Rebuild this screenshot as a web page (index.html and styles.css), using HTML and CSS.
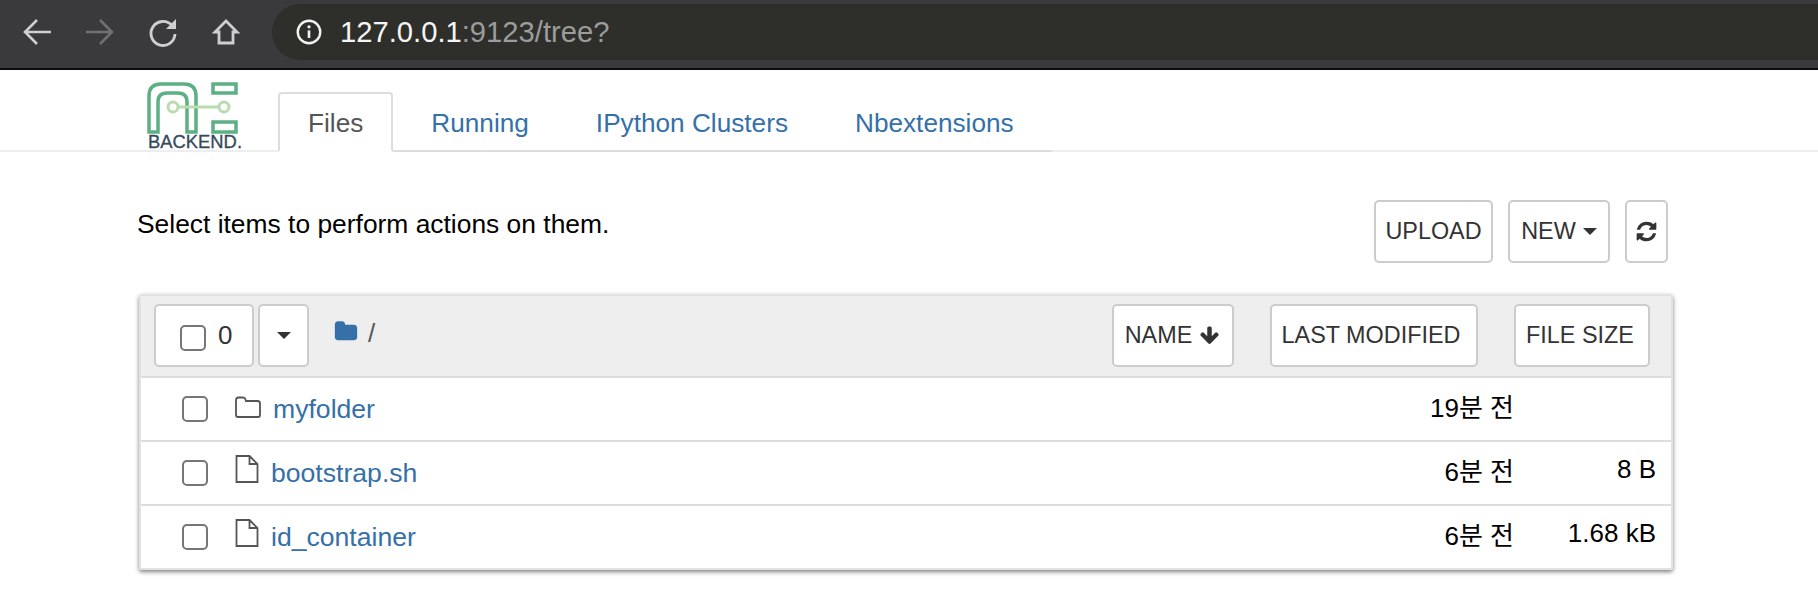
FILE: index.html
```html
<!DOCTYPE html>
<html>
<head>
  <title>Home</title>
  <meta charset="UTF-8">
  <link rel="stylesheet" href="styles.css">
</head>
<body>
  <div class="browser-bar">
    <div class="nav-icons">
      <svg class="nav-icon" viewBox="0 0 32 32"><path d="M30 16H4M16 4L4 16l12 12" fill="none" stroke="#cfcfcf" stroke-width="2.6"/></svg>
      <svg class="nav-icon" viewBox="0 0 32 32"><path d="M2 16h26M16 4l12 12-12 12" fill="none" stroke="#707070" stroke-width="2.6"/></svg>
      <svg class="nav-icon" viewBox="0 0 32 32"><path d="M25 9.500A12 12 0 1 0 28 18" fill="none" stroke="#cfcfcf" stroke-width="2.8"/><path d="M19 13h10V3z" fill="#cfcfcf"/></svg>
      <svg class="nav-icon" viewBox="0 0 32 32"><path d="M16 5L5 16h4v11h14V16h4z" fill="none" stroke="#cfcfcf" stroke-width="2.8"/></svg>
    </div>
    <div class="url-pill">
      <svg class="info-icon" viewBox="0 0 24 24"><circle cx="12" cy="12" r="10.400" fill="none" stroke="#f2f2f2" stroke-width="2.200"/><path d="M12 10.500v7" stroke="#f2f2f2" stroke-width="2.400"/><circle cx="12" cy="7.200" r="1.500" fill="#f2f2f2"/></svg>
      <span class="url-host">127.0.0.1</span><span class="url-rest">:9123/tree?</span>
    </div>
  </div>

  <div class="header">
    <svg class="logo" viewBox="0 0 96 67">
      <path d="M2 50V14Q2 2 14 2H37Q49 2 49 14V50H40V20Q40 11 31 11H20Q11 11 11 20V50Z" fill="none" stroke="#5cb083" stroke-width="3.500"/>
      <path d="M66 2h23v9H66zM66 40h23v10H66z" fill="none" stroke="#5cb083" stroke-width="3.500"/>
      <path d="M31 25h41" stroke="#b9dcae" stroke-width="3"/>
      <circle cx="26" cy="25" r="5" fill="#fff" stroke="#b9dcae" stroke-width="3"/>
      <circle cx="77" cy="25" r="5" fill="#fff" stroke="#b9dcae" stroke-width="3"/>
      <text x="1" y="66" class="logo-text" textLength="94" lengthAdjust="spacingAndGlyphs">BACKEND.</text>
    </svg>
    <div class="tabs">
      <a class="tab tab-active">Files</a>
      <a class="tab">Running</a>
      <a class="tab">IPython Clusters</a>
      <a class="tab">Nbextensions</a>
    </div>
  </div>

  <div class="main">
    <div class="action-row">
      <p class="hint">Select items to perform actions on them.</p>
      <div class="actions">
        <button class="btn btn-upload">UPLOAD</button>
        <button class="btn btn-new">NEW <span class="caret"></span></button>
        <button class="btn btn-refresh">
          <svg class="fa" viewBox="0 0 1792 1792"><path d="M1639 1056q0 5-1 7-64 268-268 434.5t-478 166.5q-146 0-282.5-55t-243.5-157l-129 129q-19 19-45 19t-45-19-19-45v-448q0-26 19-45t45-19h448q26 0 45 19t19 45-19 45l-137 137q71 66 161 102t187 36q134 0 250-65t186-179q11-17 53-117 8-23 30-23h192q13 0 22.5 9.5t9.5 22.5zm25-800v448q0 26-19 45t-45 19h-448q-26 0-45-19t-19-45 19-45l138-138q-148-137-349-137-134 0-250 65t-186 179q-11 17-53 117-8 23-30 23h-199q-13 0-22.5-9.5t-9.5-22.5v-7q65-268 270-434.5t480-166.5q146 0 284 55.5t245 156.5l130-129q19-19 45-19t45 19 19 45z"/></svg>
        </button>
      </div>
    </div>

    <div class="panel">
      <div class="panel-head">
        <div class="select-group">
          <div class="btn select-count"><span class="check"></span><span class="count">0</span></div>
          <div class="btn select-menu"><span class="caret"></span></div>
        </div>
        <div class="crumb">
          <svg class="crumb-folder" viewBox="0 100 1792 1500"><path d="M1728 608v704q0 92-66 158t-158 66h-1216q-92 0-158-66t-66-158v-960q0-92 66-158t158-66h320q92 0 158 66t66 158v32h672q92 0 158 66t66 158z"/></svg>
          <span class="crumb-slash">/</span>
        </div>
        <div class="sorts">
          <button class="btn btn-name">NAME
            <svg class="fa fa-arrow" viewBox="0 0 1792 1792"><path d="M1675 832q0 53-37 90l-651 652q-39 37-91 37-53 0-90-37l-651-652q-38-36-38-90 0-53 38-91l74-75q39-37 91-37 53 0 90 37l294 294v-704q0-52 38-90t90-38h128q52 0 90 38t38 90v704l294-294q37-37 90-37 52 0 91 37l75 75q37 39 37 91z"/></svg>
          </button>
          <button class="btn btn-modified">LAST MODIFIED</button>
          <button class="btn btn-size">FILE SIZE</button>
        </div>
      </div>

      <div class="row">
        <span class="check"></span>
        <svg class="row-icon icon-folder" viewBox="0 0 26 22"><path d="M1 19V4q0-2.500 2.500-2.500h4.500q2 0 2.500 2l.5 1.500h11.500q2.500 0 2.500 2.500V19q0 2-2 2H3q-2 0-2-2z" fill="none" stroke="#555" stroke-width="1.800"/></svg>
        <a class="item-name">myfolder</a>
        <span class="item-time">19분 전</span>
        <span class="item-size"></span>
      </div>
      <div class="row">
        <span class="check"></span>
        <svg class="row-icon icon-file" viewBox="0 0 24 28"><path d="M1.500 1h13l8 8v18h-21zM14.500 1v8h8" fill="none" stroke="#555" stroke-width="1.800"/></svg>
        <a class="item-name">bootstrap.sh</a>
        <span class="item-time">6분 전</span>
        <span class="item-size">8 B</span>
      </div>
      <div class="row">
        <span class="check"></span>
        <svg class="row-icon icon-file" viewBox="0 0 24 28"><path d="M1.500 1h13l8 8v18h-21zM14.500 1v8h8" fill="none" stroke="#555" stroke-width="1.800"/></svg>
        <a class="item-name">id_container</a>
        <span class="item-time">6분 전</span>
        <span class="item-size">1.68 kB</span>
      </div>
    </div>
  </div>
</body>
</html>
```

FILE: styles.css
```css
* {
  box-sizing: border-box;
}
body {
  margin: 0;
  min-height: 610px;
  font-family: "Liberation Sans", "Noto Sans CJK KR", Arial, sans-serif;
  font-size: 26px;
  color: #000;
  background-color: #fff;
}
.browser-bar {
  display: flex;
  align-items: center;
  height: 70px;
  padding: 0 0 4px 21px;
  background-color: #3a3a3c;
  border-bottom: 2px solid #0c0c0c;
}
.nav-icons {
  display: flex;
  gap: 31px;
  width: 251px;
}
.nav-icon {
  width: 32px;
  height: 32px;
}
.url-pill {
  display: flex;
  align-items: center;
  flex: 1;
  height: 56px;
  padding-left: 24px;
  background-color: #2e2e2a;
  border-radius: 28px 0 0 28px;
  font-size: 29.2px;
}
.info-icon {
  width: 26px;
  height: 26px;
  margin-right: 18px;
}
.url-host {
  color: #f5f5f5;
}
.url-rest {
  color: #9c9c9c;
}
.header {
  display: flex;
  align-items: flex-end;
  height: 82px;
  padding-left: 147px;
  border-bottom: 2px solid #eee;
}
.logo {
  width: 96px;
  height: 67px;
  margin: 0 35px 1px 0;
  overflow: visible;
}
.logo-text {
  font-size: 18px;
  fill: #35495c;
  stroke: #35495c;
  stroke-width: 0.3;
}
.tabs {
  display: flex;
  width: 774px;
  height: 61px;
  margin-bottom: -2px;
  border-bottom: 2px solid #ddd;
}
.tab {
  height: 60px;
  margin: 1px 3px 0 0;
  padding: 14px 30px 0;
  border: 2px solid transparent;
  color: #3570a8;
  font-size: 26.2px;
  line-height: 30px;
}
.tab-active {
  margin-right: 6px;
  padding: 14px 28px 0;
  color: #555;
  background-color: #fff;
  border-color: #ddd;
  border-bottom-color: #fff;
  border-radius: 4px 4px 0 0;
}
.main {
  padding: 0 145px 0 137px;
}
.action-row {
  display: flex;
  justify-content: space-between;
  height: 142px;
  padding-top: 48px;
}
.hint {
  margin: 9px 0 0;
  font-size: 26.4px;
  line-height: 30px;
}
.actions {
  display: flex;
  gap: 15px;
  margin-right: 5px;
}
.btn {
  display: flex;
  align-items: center;
  justify-content: center;
  height: 63px;
  padding: 0;
  background-color: #fff;
  border: 2px solid #ccc;
  border-radius: 5px;
  color: #333;
  font-family: inherit;
  font-size: 23.4px;
}
.btn-upload {
  width: 119px;
}
.btn-new {
  width: 102px;
  gap: 7px;
}
.btn-refresh {
  width: 43px;
}
.caret {
  width: 0;
  height: 0;
  border-top: 7px solid #333;
  border-left: 7px solid transparent;
  border-right: 7px solid transparent;
}
.fa {
  width: 23px;
  height: 23px;
  fill: #333;
}
.panel {
  margin-left: 2px;
  width: 1534px;
  border: 2px solid #e2e2e2;
  border-radius: 3px;
  box-shadow: 0 2px 4px rgba(0, 0, 0, 0.5);
}
.panel-head {
  display: flex;
  height: 82px;
  padding: 8px 0 0 13px;
  background-color: #eee;
  border-bottom: 2px solid #ddd;
}
.select-group {
  display: flex;
  gap: 4px;
}
.select-count {
  width: 100px;
  justify-content: flex-start;
  padding-left: 24px;
  font-size: 26px;
}
.select-count .check {
  margin: 4px 0 0;
}
.count {
  margin: 0 0 0 12px;
}
.select-menu {
  width: 51px;
}
.crumb {
  display: flex;
  align-items: flex-start;
  margin-left: 25px;
  padding-top: 16px;
}
.crumb-folder {
  width: 24px;
  height: 22px;
  fill: #3570a8;
}
.crumb-slash {
  margin-left: 10px;
  color: #555;
  line-height: 26px;
}
.sorts {
  display: flex;
  gap: 36px;
  margin-left: auto;
  padding-right: 21px;
}
.btn-name {
  width: 122px;
  gap: 7px;
  padding-right: 1px;
}
.btn-modified {
  width: 208px;
  padding-right: 6px;
}
.btn-size {
  width: 136px;
  padding-right: 4px;
}
.fa-arrow {
  width: 21px;
  height: 21px;
}
.row {
  display: flex;
  align-items: center;
  height: 64px;
  padding-left: 41px;
  border-bottom: 2px solid #ddd;
}
.row:last-child {
  height: 62px;
  border-bottom: none;
}
.check {
  display: block;
  flex: none;
  width: 26px;
  height: 26px;
  background-color: #fff;
  border: 2px solid #767676;
  border-radius: 5px;
}
.row-icon {
  flex: none;
  margin-left: 27px;
}
.icon-folder {
  width: 26px;
  height: 22px;
  margin-bottom: 4px;
}
.icon-file {
  width: 24px;
  height: 28px;
  margin-bottom: 8px;
}
.item-name {
  color: #3570a8;
  font-size: 26.6px;
  margin-left: 12px;
}
.item-time {
  margin-left: auto;
  margin-bottom: 8px;
}
.item-size {
  width: 142px;
  margin-right: 15px;
  margin-bottom: 8px;
  text-align: right;
}
```
